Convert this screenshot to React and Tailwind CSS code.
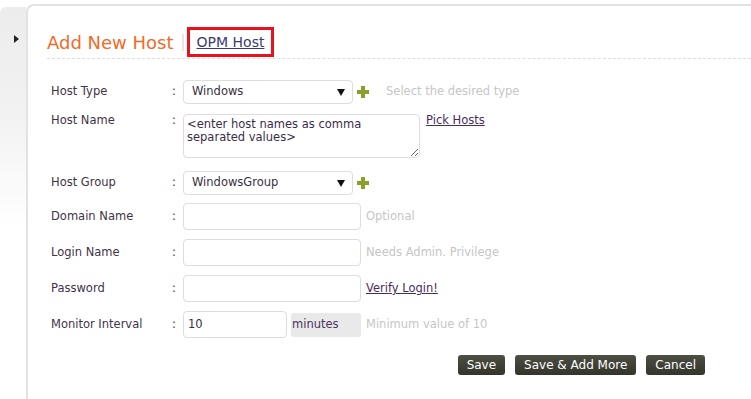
import React from 'react';

const font = { fontFamily: '"DejaVu Sans", Verdana, sans-serif' };

function Plus() {
    return (
        <svg width="12" height="12" viewBox="0 0 12 12" className="ml-[4px]">
            <path d="M4 0h4v4h4v4H8v4H4V8H0V4h4z" fill="#8aa02a" />
        </svg>
    );
}

function Arrow() {
    return (
        <svg width="8" height="7" viewBox="0 0 8 7">
            <path d="M0 0h8L4 7z" fill="#111" />
        </svg>
    );
}

function Select({ value }) {
    return (
        <div className="flex h-[24px] w-[170px] items-center justify-between rounded-[4px] border border-[#dddddd] bg-white pl-[8px] pr-[7px] text-[11.5px] text-[#3a3040]">
            <span>{value}</span>
            <Arrow />
        </div>
    );
}

function Row({ label, children, className = 'items-center', labelClass = '' }) {
    return (
        <div className={`flex ${className}`}>
            <div className={`w-[121px] text-[11.5px] text-[#3f3347] ${labelClass}`}>{label}</div>
            <div className={`w-[11px] text-[11.5px] text-[#3f3347] ${labelClass}`}>:</div>
            {children}
        </div>
    );
}

const Hint = ({ children }) => (
    <span className="ml-[5px] text-[11.5px] text-[#c6c6c6]">{children}</span>
);

const Input = ({ w = 'w-[178px]', value = '' }) => (
    <div className={`flex h-[27px] ${w} items-center rounded-[4px] border border-[#dddddd] bg-white pl-[4px] text-[11.5px] text-[#3a3040]`}>
        {value}
    </div>
);

function Button({ children }) {
    return (
        <button
            type="button"
            className="h-[20px] rounded-[3px] bg-gradient-to-b from-[#4d4f43] to-[#33352b] px-[9px] text-[12px] leading-[20px] text-white"
        >
            {children}
        </button>
    );
}

export default function App() {
    return (
        <div className="flex min-h-[399px] bg-white" style={font}>
            <div className="w-[26px] pt-[7px]">
                <div className="h-[220px] rounded-tl-[6px] bg-gradient-to-b from-[#ececec] via-[#f2f2f2] to-white pl-[14px] pt-[28px]">
                    <svg width="5" height="8" viewBox="0 0 5 8">
                        <path d="M0 0l5 4-5 4z" fill="#222" />
                    </svg>
                </div>
            </div>

            <div className="mt-[4px] flex-1 rounded-tl-[8px] border-l-2 border-t-2 border-[#e2e2e2]">
                <div className="ml-[19px] mt-[21px] flex items-center border-b border-dashed border-[#dddddd] pb-[1px]">
                    <span className="text-[18px] leading-[21px] text-[#f26a2a]">Add New Host</span>
                    <div className="ml-[8px] mr-[3px] h-[17px] w-[2px] bg-[#e6e6e6]" />
                    <div className="flex h-[30px] items-center border-[3px] border-[#e8121d] px-[7px]">
                        <a href="#" className="text-[14px] text-[#3b3b72] underline">OPM Host</a>
                    </div>
                </div>

                <div className="ml-[23px] mt-[21px] flex flex-col">
                    <Row label="Host Type">
                        <Select value="Windows" />
                        <Plus />
                        <span className="ml-[17px] text-[11.5px] text-[#c6c6c6]">Select the desired type</span>
                    </Row>

                    <Row label="Host Name" className="mt-[10px] items-start" labelClass="leading-[13px]">
                        <textarea
                            className="h-[44px] w-[237px] rounded-[4px] border border-[#dddddd] pl-[3px] pr-[14px] pt-[3px] text-[11.5px] leading-[13px] text-[#3a2d4a] outline-none"
                            style={font}
                            defaultValue="<enter host names as comma separated values>"
                        />
                        <a href="#" className="ml-[6px] text-[11.5px] leading-[13px] text-[#4a2c5c] underline">Pick Hosts</a>
                    </Row>

                    <Row label="Host Group" className="mt-[13px] items-center">
                        <Select value="WindowsGroup" />
                        <Plus />
                    </Row>

                    <Row label="Domain Name" className="mt-[8px] items-center">
                        <Input />
                        <Hint>Optional</Hint>
                    </Row>

                    <Row label="Login Name" className="mt-[9px] items-center">
                        <Input />
                        <Hint>Needs Admin. Privilege</Hint>
                    </Row>

                    <Row label="Password" className="mt-[9px] items-center">
                        <Input />
                        <a href="#" className="ml-[5px] text-[11.5px] text-[#4a2c5c] underline">Verify Login!</a>
                    </Row>

                    <Row label="Monitor Interval" className="mt-[9px] items-center">
                        <Input w="w-[104px]" value="10" />
                        <div className="ml-[4px] flex h-[24px] w-[70px] items-center rounded-[3px] bg-[#e9e9e9] pl-[1px] text-[11.5px] text-[#4a3560]">
                            minutes
                        </div>
                        <Hint>Minimum value of 10</Hint>
                    </Row>
                </div>

                <div className="mt-[17px] flex justify-end gap-[10px] pr-[46px]">
                    <Button>Save</Button>
                    <Button>Save &amp; Add More</Button>
                    <Button>Cancel</Button>
                </div>
            </div>
        </div>
    );
}
